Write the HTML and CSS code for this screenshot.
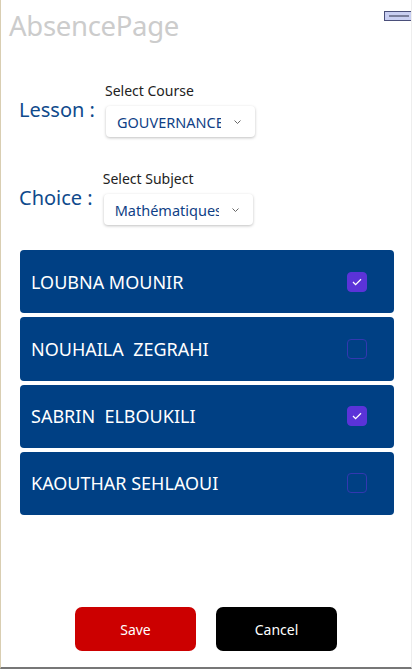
FILE: index.html
```html
<!DOCTYPE html>
<html>
<head>
<meta charset="utf-8">
<link rel="stylesheet" href="styles.css">
</head>
<body>
<div class="page">
  <header class="header">
    <h1 class="title">AbsencePage</h1>
    <div class="menu-icon"><span class="menu-line"></span></div>
  </header>

  <div class="field-row row-lesson">
    <div class="label">Lesson :</div>
    <div class="field">
      <div class="caption">Select Course</div>
      <div class="select"><span class="select-text">GOUVERNANCE</span>
        <svg class="chev" width="9" height="6" viewBox="0 0 9 6"><path d="M1.5 1.5l3 3 3-3" fill="none" stroke="#666" stroke-width="1"/></svg>
      </div>
    </div>
  </div>

  <div class="field-row row-choice">
    <div class="label">Choice :</div>
    <div class="field">
      <div class="caption">Select Subject</div>
      <div class="select"><span class="select-text">Mathématiques</span>
        <svg class="chev" width="9" height="6" viewBox="0 0 9 6"><path d="M1.5 1.5l3 3 3-3" fill="none" stroke="#666" stroke-width="1"/></svg>
      </div>
    </div>
  </div>

  <div class="list">
    <div class="card"><span class="name">LOUBNA MOUNIR</span><span class="check on"><svg width="10" height="8" viewBox="0 0 10 8"><path d="M1 4l2.6 2.6L9 1.2" fill="none" stroke="#fff" stroke-width="1.3"/></svg></span></div>
    <div class="card"><span class="name">NOUHAILA&nbsp; ZEGRAHI</span><span class="check"></span></div>
    <div class="card"><span class="name">SABRIN&nbsp; ELBOUKILI</span><span class="check on"><svg width="10" height="8" viewBox="0 0 10 8"><path d="M1 4l2.6 2.6L9 1.2" fill="none" stroke="#fff" stroke-width="1.3"/></svg></span></div>
    <div class="card"><span class="name">KAOUTHAR SEHLAOUI</span><span class="check"></span></div>
  </div>

  <div class="actions">
    <button class="btn save">Save</button>
    <button class="btn cancel">Cancel</button>
  </div>
</div>
</body>
</html>
```

FILE: styles.css
```css
html, body {
  margin: 0;
  padding: 0;
  background: #fff;
}
.page {
  width: 412px;
  height: 669px;
  box-sizing: border-box;
  border-left: 1px solid #d9ceb2;
  border-right: 1px solid #eeeeee;
  border-bottom: 2px solid #777;
  font-family: "Noto Sans", "Open Sans", sans-serif;
  overflow: hidden;
}
.header {
  display: flex;
  justify-content: space-between;
  align-items: flex-start;
  height: 82px;
}
.title {
  margin: 8px 0 0 8px;
  font-size: 27.5px;
  font-weight: 400;
  color: #cccccc;
  line-height: 36px;
  letter-spacing: -0.3px;
}
.menu-icon {
  margin-top: 11px;
  width: 27px;
  height: 10px;
  box-sizing: border-box;
  background: #c9cff2;
  border: 1px solid #4a4f7a;
  border-right: none;
  display: flex;
  align-items: center;
  justify-content: flex-end;
  padding-right: 2px;
}
.menu-line {
  width: 20px;
  height: 2px;
  background: #7a7f9c;
}
.field-row {
  display: flex;
  align-items: center;
  margin-left: 18px;
}
.row-choice {
  margin-top: 33px;
}
.label {
  font-size: 20px;
  color: #0f4a8c;
  margin-right: 10px;
  line-height: 28px;
}
.field {
  display: flex;
  flex-direction: column;
}
.caption {
  font-size: 14px;
  color: #222;
  line-height: 18px;
  margin-bottom: 6px;
}
.select {
  width: 149px;
  height: 31px;
  box-sizing: border-box;
  background: #fff;
  border-radius: 4px;
  box-shadow: 0 1px 3px rgba(0,0,0,0.25);
  display: flex;
  align-items: center;
  padding-left: 11px;
  margin-left: 1px;
}
.select-text {
  width: 104px;
  overflow: hidden;
  white-space: nowrap;
  font-size: 14.5px;
  color: #0f3f86;
}
.chev {
  margin-left: 12px;
}
.list {
  margin: 25px 0 0 19px;
  width: 374px;
  display: flex;
  flex-direction: column;
  gap: 4px;
}
.card {
  height: 63.25px;
  background: #004084;
  border-radius: 4px;
  display: flex;
  align-items: center;
  justify-content: space-between;
  padding: 0 27px 0 11px;
}
.name {
  color: #fff;
  font-size: 18px;
}
.check {
  width: 20px;
  height: 20px;
  box-sizing: border-box;
  border-radius: 4px;
  border: 1.5px solid #3338b0;
  display: flex;
  align-items: center;
  justify-content: center;
}
.check.on {
  background: #5b33d8;
  border-color: #5b33d8;
}
.actions {
  display: flex;
  justify-content: center;
  gap: 20px;
  margin-top: 92px;
}
.btn {
  width: 121px;
  height: 44px;
  border: none;
  border-radius: 7px;
  color: #fff;
  font-family: "Noto Sans", "Open Sans", sans-serif;
  font-size: 14px;
}
.save { background: #cc0000; }
.cancel { background: #000; }
```
